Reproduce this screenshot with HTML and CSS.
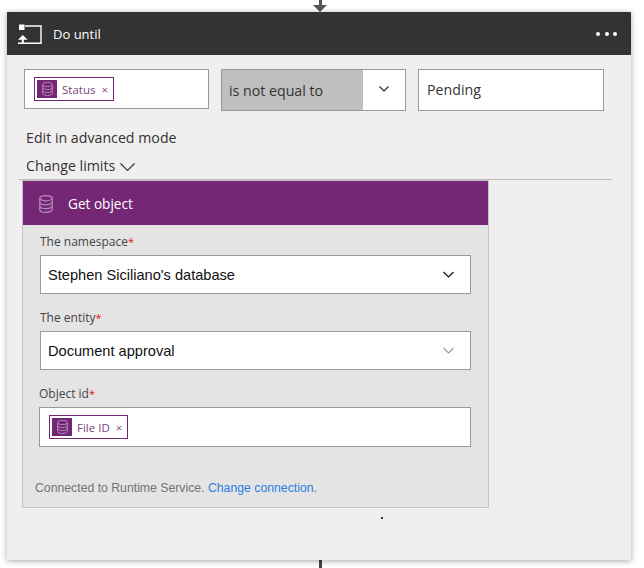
FILE: index.html
```html
<!DOCTYPE html>
<html lang="en">
<head>
  <meta charset="UTF-8" />
  <title>Do until</title>
  <link rel="stylesheet" href="styles.css">
</head>
<body>
  <svg class="defs" width="0" height="0">
    <symbol id="db" viewBox="0 0 14 18">
      <g fill="none" stroke="currentColor" stroke-width="1.2">
        <ellipse cx="7" cy="3.2" rx="6.2" ry="2.6" />
        <path d="M.8 3.2v11.6c0 1.5 2.8 2.6 6.2 2.6s6.2-1.1 6.2-2.6V3.2" />
        <path d="M.8 7.2c0 1.5 2.8 2.6 6.2 2.6s6.2-1.1 6.2-2.6" />
        <path d="M.8 11c0 1.5 2.8 2.6 6.2 2.6s6.2-1.1 6.2-2.6" />
      </g>
    </symbol>
  </svg>

  <div class="flow">
    <div class="connector-top">
      <span class="connector-line"></span>
      <span class="connector-head"></span>
    </div>

    <div class="card">
      <div class="card-header">
        <svg class="loop-icon" width="24" height="21" viewBox="0 0 24 21">
          <rect x="1" y="0.5" width="5.5" height="5.5" fill="#fff" />
          <path d="M7 2h16v17.3H0" fill="none" stroke="#fff" stroke-width="1.4" />
          <path d="M0 15.8l4.8-4.8 4.8 4.8z" fill="#fff" />
          <path d="M4.8 14v5" stroke="#fff" stroke-width="2" />
        </svg>
        <span class="card-title">Do until</span>
        <div class="dots"><span></span><span></span><span></span></div>
      </div>

      <div class="card-body">
        <div class="condition">
          <div class="field field-token">
            <span class="chip">
              <span class="chip-icon"><svg width="11" height="14"><use href="#db" /></svg></span>
              <span class="chip-label">Status</span>
              <span class="chip-x">×</span>
            </span>
          </div>
          <div class="field field-select">
            <span class="select-value">is not equal to</span>
            <span class="select-arrow">
              <svg width="10" height="6" viewBox="0 0 10 6"><path d="M.5.5L5 5 9.5.5" fill="none" stroke="#222" stroke-width="1.1" /></svg>
            </span>
          </div>
          <div class="field field-text">Pending</div>
        </div>

        <div class="link-row">Edit in advanced mode</div>
        <div class="link-row limits">
          Change limits
          <svg width="15" height="8" viewBox="0 0 15 8"><path d="M.5.5l7 7 7-7" fill="none" stroke="#333" stroke-width="1.1" /></svg>
        </div>
        <div class="divider"></div>

        <div class="action">
          <div class="action-header">
            <svg class="action-icon" width="14" height="18"><use href="#db" /></svg>
            <span>Get object</span>
          </div>
          <div class="action-body">
            <label class="form-label">The namespace<span class="req">*</span></label>
            <div class="form-input">
              <span>Stephen Siciliano's database</span>
              <svg width="11" height="7" viewBox="0 0 11 7"><path d="M.5 1L5.5 6l5-5" fill="none" stroke="#111" stroke-width="1.2" /></svg>
            </div>
            <label class="form-label">The entity<span class="req">*</span></label>
            <div class="form-input">
              <span>Document approval</span>
              <svg width="11" height="7" viewBox="0 0 11 7"><path d="M.5 1L5.5 6l5-5" fill="none" stroke="#999" stroke-width="1.1" /></svg>
            </div>
            <label class="form-label label-wide">Object id<span class="req">*</span></label>
            <div class="form-input input-token">
              <span class="chip">
                <span class="chip-icon"><svg width="11" height="14"><use href="#db" /></svg></span>
                <span class="chip-label">File ID</span>
                <span class="chip-x">×</span>
              </span>
            </div>
            <p class="connection">Connected to Runtime Service. <a href="#">Change connection.</a></p>
          </div>
        </div>
      </div>
      <span class="speck"></span>
    </div>

    <div class="connector-bottom"></div>
  </div>
</body>
</html>
```

FILE: styles.css
```css
html, body {
  margin: 0;
  height: 568px;
  overflow: hidden;
  background: #fff;
}
body {
  font-family: 'Open Sans', 'Noto Sans', sans-serif;
  color: #333;
}
.defs {
  position: absolute;
}
.flow {
  width: 624px;
  margin-left: 7px;
  display: flex;
  flex-direction: column;
  align-items: center;
}
.connector-top {
  height: 12px;
  margin-left: 2px;
  display: flex;
  flex-direction: column;
  align-items: center;
}
.connector-line {
  width: 3px;
  height: 5px;
  background: #555;
}
.connector-head {
  width: 0;
  height: 0;
  border-left: 7px solid transparent;
  border-right: 7px solid transparent;
  border-top: 7px solid #555;
}
.card {
  width: 624px;
  height: 548px;
  background: #f0eeef;
  box-shadow: 0 1px 6px rgba(0, 0, 0, 0.35);
  position: relative;
}
.card-header {
  height: 43px;
  background: #333;
  color: #fff;
  display: flex;
  align-items: center;
  padding: 0 14px 0 11px;
}
.loop-icon {
  flex: none;
  margin-top: 2px;
}
.card-title {
  margin-left: 11px;
  font-size: 13px;
  margin-top: 1px;
}
.dots {
  margin-left: auto;
  display: flex;
  gap: 4.5px;
}
.dots span {
  width: 4px;
  height: 4px;
  border-radius: 50%;
  background: #fff;
}
.card-body {
  padding: 14px 0 0 0;
}
.condition {
  display: flex;
  gap: 12px;
  margin-left: 17px;
  align-items: flex-start;
}
.field {
  box-sizing: border-box;
  width: 185px;
  height: 42px;
  background: #fff;
  border: 1px solid #999;
  display: flex;
  align-items: center;
  font-size: 14.2px;
}
.field-token {
  height: 40px;
  padding-left: 9px;
}
.field-select .select-value {
  flex: 1;
  align-self: stretch;
  background: #bfbfbf;
  display: flex;
  align-items: center;
  padding-left: 7px;
}
.select-arrow {
  width: 42px;
  display: flex;
  justify-content: center;
  margin-top: -3px;
}
.field-text {
  width: 186px;
  padding-left: 8px;
  padding-bottom: 1px;
}
.chip {
  box-sizing: border-box;
  height: 24px;
  border: 1px solid #742774;
  padding: 2px;
  display: inline-flex;
  align-items: center;
  color: #7d3f7d;
  font-size: 11.5px;
}
.chip-icon {
  width: 20px;
  height: 18px;
  background: #742774;
  color: #b98db9;
  display: flex;
  align-items: center;
  justify-content: center;
}
.chip-label {
  margin-left: 5px;
}
.chip-x {
  margin-left: 6px;
  margin-right: 3px;
  color: #8a4f8a;
}
.link-row {
  margin: 9px 0 0 19px;
  font-size: 14.2px;
  line-height: 19px;
  color: #333;
}
.condition + .link-row {
  margin-top: 17px;
}
.limits {
  display: flex;
  align-items: center;
  gap: 5px;
}
.limits svg {
  margin-top: 3px;
}
.divider {
  height: 1px;
  margin: 4px 19px 0 12px;
  background: #bcbcbc;
}
.action {
  box-sizing: border-box;
  width: 467px;
  height: 328px;
  margin-left: 15px;
  background: #e4e4e4;
  border: 1px solid #c4c4c4;
}
.action-header {
  height: 44px;
  background: #742774;
  color: #fff;
  display: flex;
  align-items: center;
  padding-left: 16px;
  font-size: 13.6px;
}
.action-icon {
  color: #b98db9;
  margin-right: 15px;
  margin-top: 1px;
}
.action-body {
  padding: 9px 17px 0 17px;
}
.form-label {
  display: block;
  font-size: 12px;
  line-height: 16px;
  color: #444;
  margin-top: 16px;
  margin-bottom: 5px;
}
.form-label:first-child {
  margin-top: 0;
}
.label-wide {
  margin-left: -1px;
}
.req {
  color: #e81123;
  font-size: 11px;
}
.form-input {
  box-sizing: border-box;
  height: 39px;
  background: #fff;
  border: 1px solid #999;
  display: flex;
  align-items: center;
  justify-content: space-between;
  padding: 0 16px 0 7px;
  font-family: 'Liberation Sans', Arial, sans-serif;
  font-size: 14.6px;
  color: #111;
}
.input-token {
  height: 40px;
  margin-left: -1px;
  padding-left: 9px;
  font-family: 'Open Sans', 'Noto Sans', sans-serif;
}
.connection {
  margin: 33px 0 0 -5px;
  font-family: 'Liberation Sans', Arial, sans-serif;
  font-size: 12.25px;
  line-height: 16px;
  color: #737373;
}
.connection a {
  color: #2b7de0;
  text-decoration: none;
}
.speck {
  position: absolute;
  left: 374px;
  top: 505px;
  width: 2px;
  height: 2px;
  background: #333;
}
.connector-bottom {
  width: 3px;
  height: 8px;
  margin-left: 2px;
  background: #444;
}
```
